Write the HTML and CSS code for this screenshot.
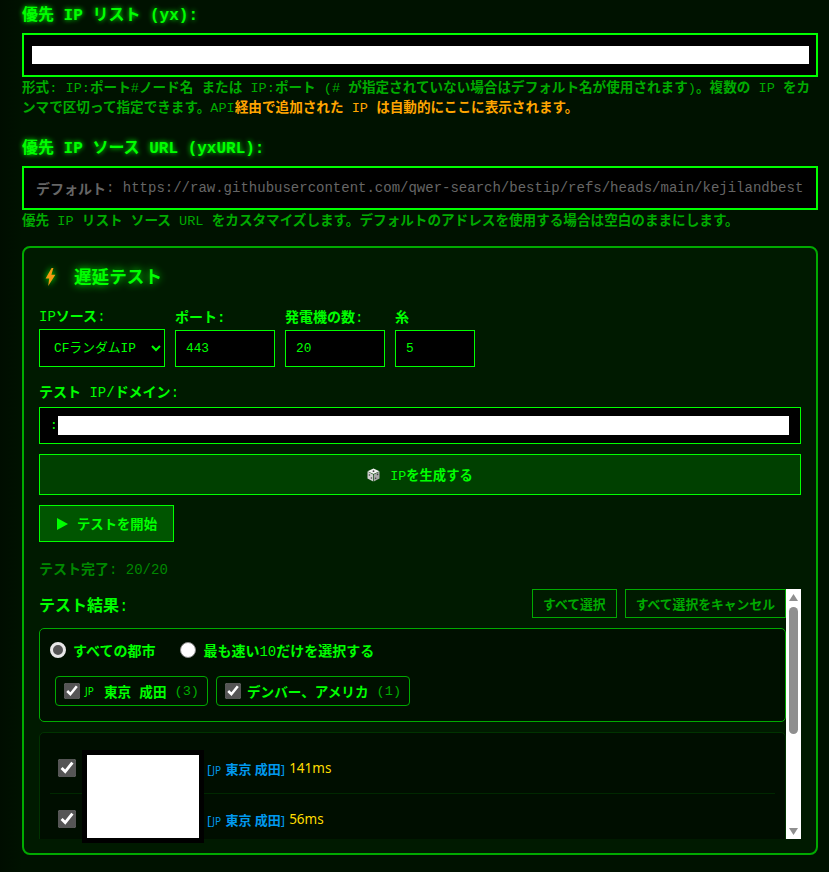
FILE: index.html
```html
<!DOCTYPE html>
<html lang="ja">
<head>
    <meta charset="UTF-8">
    <title>遅延テスト</title>
    <link rel="stylesheet" href="styles.css">
</head>
<body>
<div class="page">

    <!-- 优先IP -->
    <h3 class="field-title">優先 <span>IP</span> リスト (yx):</h3>
    <div class="textbox"><span class="mask"></span></div>
    <p class="hint">形式<i>: IP:</i>ポート<i>#</i>ノード名 または <i>IP:</i>ポート <i>(# </i>が指定されていない場合はデフォルト名が使用されます<i>)</i>。複数の <i>IP</i> をカンマで区切って指定できます。<i>API</i><em>経由で追加された <i>IP</i> は自動的にここに表示されます。</em></p>

    <h3 class="field-title second">優先 <span>IP</span> ソース <span>URL</span> (yxURL):</h3>
    <div class="textbox url">デフォルト<i>: https://raw.githubusercontent.com/qwer-search/bestip/refs/heads/main/kejilandbest</i></div>
    <p class="hint">優先 <i>IP</i> リスト ソース <i>URL</i> をカスタマイズします。デフォルトのアドレスを使用する場合は空白のままにします。</p>

    <!-- 延迟测试 -->
    <div class="card">
        <h3 class="card-title">
            <svg class="bolt" width="11" height="18" viewBox="0 0 11 18"><path d="M6.6 0 L0.6 10.4 L4.2 10.4 L3.2 18 L10.4 6.8 L6.4 6.8 L8.4 0 Z" fill="#f29a12"/></svg>
            <span>遅延テスト</span>
        </h3>

        <div class="options">
            <div class="option">
                <label><i>IP</i>ソース<i>:</i></label>
                <select class="source"><option>CFランダムIP</option></select>
            </div>
            <div class="option">
                <label>ポート:</label>
                <input class="num" type="text" value="443">
            </div>
            <div class="option">
                <label>発電機の数<i>:</i></label>
                <input class="num" type="text" value="20">
            </div>
            <div class="option">
                <label>糸</label>
                <input class="num small" type="text" value="5">
            </div>
        </div>

        <label class="test-label">テスト <i>IP/</i>ドメイン<i>:</i></label>
        <div class="testbox"><i>:</i><span class="mask"></span></div>

        <button class="gen-btn">
            <svg width="13" height="14" viewBox="0 0 13 14"><path d="M6.5 0.5 L12.5 3.2 L6.5 6 L0.5 3.2 Z" fill="#f2f2f2"/><path d="M0.5 3.6 L6.2 6.4 L6.2 13.5 L0.5 10.6 Z" fill="#d0d0d0"/><path d="M12.5 3.6 L6.8 6.4 L6.8 13.5 L12.5 10.6 Z" fill="#a8a8a8"/><circle cx="6.5" cy="3.2" r="0.9" fill="#444"/><circle cx="2.4" cy="7" r="0.8" fill="#444"/><circle cx="4.4" cy="10" r="0.8" fill="#444"/><circle cx="10.6" cy="6.4" r="0.8" fill="#444"/><circle cx="8.6" cy="10.2" r="0.8" fill="#444"/></svg>
            <span><i>IP</i>を生成する</span>
        </button>

        <button class="start-btn">
            <svg width="11" height="12" viewBox="0 0 11 12"><path d="M0 0 L11 6 L0 12 Z" fill="#00ff00"/></svg>
            <span>テストを開始</span>
        </button>

        <p class="status">テスト完了<i>: 20/20</i></p>

        <div class="results">
            <div class="results-inner">
                <div class="results-head">
                    <h4>テスト結果<i>:</i></h4>
                    <div class="head-btns">
                        <button>すべて選択</button>
                        <button>すべて選択をキャンセル</button>
                    </div>
                </div>

                <div class="filter">
                    <div class="radios">
                        <label><input type="radio" name="mode" checked><span>すべての都市</span></label>
                        <label><input type="radio" name="mode"><span>最も速い<i>10</i>だけを選択する</span></label>
                    </div>
                    <div class="chips">
                        <label class="chip"><input type="checkbox" checked><small>JP</small><span>東京 成田</span><i>(3)</i></label>
                        <label class="chip"><input type="checkbox" checked><span>デンバー、アメリカ</span><i>(1)</i></label>
                    </div>
                </div>

                <div class="list">
                    <div class="row"><input type="checkbox" checked><span class="loc">[<small>JP</small> <b>東京 成田</b>]</span><span class="ms">141ms</span></div>
                    <div class="row"><input type="checkbox" checked><span class="loc">[<small>JP</small> <b>東京 成田</b>]</span><span class="ms">56ms</span></div>
                </div>
            </div>

            <!-- 滚动条 -->
            <div class="scrollbar">
                <svg width="9" height="7" viewBox="0 0 9 7"><path d="M4.5 0 L9 7 L0 7 Z" fill="#8f8f8f"/></svg>
                <div class="thumb"></div>
                <svg class="down" width="9" height="7" viewBox="0 0 9 7"><path d="M0 0 L9 0 L4.5 7 Z" fill="#8f8f8f"/></svg>
            </div>
        </div>

        <!-- 遮住的部分 -->
        <div class="cover"></div>
    </div>

</div>
</body>
</html>
```

FILE: styles.css
```css
/*初始化*/
html,body{
    margin: 0;
    padding: 0;
    height: 872px;
    overflow: hidden;
}
body{
    background-color: #000f00;
    font-family: "Liberation Mono", "Noto Sans CJK JP", monospace;
    color: #00ff00;
}
i{
    font-style: normal;
    font-weight: normal;
}
h3,h4,p{
    margin: 0;
}

/*1.页面*/
.page{
    padding: 7px 11px 0 22px;
    background: linear-gradient(to right, #000d00, #001200 22px);
    height: 872px;
    box-sizing: border-box;
}
.field-title{
    font-size: 16px;
    line-height: 18px;
    margin-bottom: 8px;
    text-shadow: 0 0 5px #00ff00;
}
.field-title.second{
    margin-top: 21px;
}
.textbox{
    display: flex;
    height: 44px;
    box-sizing: border-box;
    padding: 11px 7px 11px 8px;
    border: 2px solid #00ff00;
    background-color: #000;
}
.mask{
    flex: 1;
    background-color: #fff;
}
.textbox.url{
    align-items: center;
    padding: 0 12px;
    font-size: 14px;
    font-weight: bold;
    white-space: nowrap;
    color: #666;
}
.hint{
    margin-top: 2px;
    font-size: 13.6px;
    line-height: 20px;
    font-weight: bold;
    color: #00aa00;
}
.hint em{
    font-style: normal;
    color: #ffa500;
}

/*2.延迟测试卡片*/
.card{
    position: relative;
    margin-top: 14px;
    padding: 15px 15px 14px;
    border: 2px solid #00aa00;
    border-radius: 8px;
    background-color: #001a00;
}
.card-title{
    display: flex;
    align-items: center;
    gap: 18px;
    height: 24px;
    padding-left: 6px;
    font-size: 17.6px;
    text-shadow: 0 0 8px #00ff00;
}
.bolt{
    margin-top: 4px;
    filter: drop-shadow(0 0 3px #00ff00);
}
.options{
    display: flex;
    align-items: flex-end;
    gap: 10px;
    margin-top: 20px;
}
.option label,.test-label{
    display: block;
    font-size: 14px;
    line-height: 20px;
    font-weight: bold;
}
.option label{
    margin-bottom: 2px;
}
.source{
    display: block;
    width: 126px;
    height: 38px;
    padding: 0 8px 0 10px;
    border: 1px solid #00ff00;
    border-radius: 0;
    background-color: #000;
    color: #00ff00;
    font-family: inherit;
    font-size: 12.8px;
}
.num{
    display: block;
    width: 100px;
    height: 37px;
    box-sizing: border-box;
    padding: 0 10px;
    border: 1px solid #00ff00;
    background-color: #000;
    color: #00ff00;
    font-family: inherit;
    font-size: 12.8px;
}
.num.small{
    width: 80px;
}
.test-label{
    margin-top: 16px;
}
.testbox{
    display: flex;
    align-items: center;
    height: 37px;
    box-sizing: border-box;
    margin-top: 4px;
    padding: 0 11px 0 10px;
    border: 1px solid #00ff00;
    background-color: #000;
    font-size: 12.8px;
}
.testbox .mask{
    height: 19px;
}

/*3.按钮*/
button{
    font-family: inherit;
    font-weight: bold;
    cursor: pointer;
}
.gen-btn{
    display: flex;
    align-items: center;
    justify-content: center;
    gap: 10px;
    width: 100%;
    height: 41px;
    margin-top: 10px;
    border: 1px solid #00ff00;
    background-color: #004000;
    color: #00ff00;
    font-size: 13.33px;
}
.start-btn{
    display: flex;
    align-items: center;
    gap: 9px;
    width: 135px;
    height: 37px;
    margin-top: 10px;
    padding: 0 0 0 17px;
    border: 1px solid #00ff00;
    background-color: #005500;
    color: #00ff00;
    font-size: 13.33px;
}
.status{
    margin-top: 18px;
    font-size: 14px;
    line-height: 20px;
    font-weight: bold;
    color: #008800;
}

/*4.结果*/
.results{
    display: flex;
    height: 250px;
    margin-top: 9px;
}
.results-inner{
    flex: 1;
    min-width: 0;
    overflow: hidden;
}
.scrollbar{
    display: flex;
    flex-direction: column;
    align-items: center;
    width: 15px;
    padding: 5px 0 4px;
    box-sizing: border-box;
    background-color: #fff;
}
.thumb{
    width: 9px;
    height: 127px;
    margin-top: 6px;
    border-radius: 5px;
    background-color: #8f8f8f;
}
.scrollbar .down{
    margin-top: auto;
}
.results-head{
    display: flex;
    justify-content: space-between;
    align-items: center;
    height: 29px;
}
.results-head h4{
    font-size: 16px;
}
.head-btns{
    display: flex;
    gap: 8px;
}
.head-btns button{
    height: 29px;
    padding: 0 10px;
    border: 1px solid #00aa00;
    background-color: transparent;
    color: #00aa00;
    font-size: 12.8px;
}
.filter{
    height: 94px;
    box-sizing: border-box;
    margin-top: 10px;
    padding: 11px 10px;
    border: 1px solid #00aa00;
    border-radius: 5px;
    background-color: #001000;
}
.radios{
    display: flex;
    gap: 25px;
    font-size: 14px;
    font-weight: bold;
}
.radios label{
    display: flex;
    align-items: center;
    gap: 7px;
    height: 20px;
}
.radios input{
    appearance: none;
    width: 16px;
    height: 16px;
    margin: 0;
    border: 1px solid #8a8a8a;
    border-radius: 50%;
    background-color: #fff;
}
.radios input:checked{
    border: 3px solid #e8e8e8;
    background-color: #555;
}
.chips{
    display: flex;
    gap: 8px;
    margin: 16px 0 0 5px;
}
.chip{
    display: flex;
    align-items: center;
    height: 30px;
    box-sizing: border-box;
    padding: 0 8px;
    border: 1px solid #00aa00;
    border-radius: 4px;
    font-size: 13.6px;
    font-weight: bold;
    white-space: pre;
}
.chip input{
    width: 16px;
    height: 16px;
    margin: 0 6px 0 0;
    accent-color: #555;
}
.chip small{
    font-family: "Noto Sans", sans-serif;
    font-size: 10px;
    font-weight: normal;
    width: 10px;
    margin: 0 9px 0 -1px;
}
.chip i{
    margin-left: 8px;
    color: #00aa00;
}
.list{
    margin-top: 10px;
    height: 120px;
    box-sizing: border-box;
    padding: 10px 10px 0;
    border: 1px solid #003300;
    border-radius: 5px;
    background-color: #000e00;
}
.row{
    display: flex;
    align-items: center;
    height: 51px;
    box-sizing: border-box;
    padding-left: 8px;
    border-bottom: 1px solid #002800;
    font-family: "Noto Sans", "Noto Sans CJK JP", sans-serif;
    font-size: 13px;
}
.row input{
    width: 18px;
    height: 18px;
    margin: 0 131px 0 0;
    accent-color: #555;
}
.loc{
    color: #0099ee;
    margin-right: 4px;
}
.loc small{
    font-size: 10px;
    margin: 0 1px;
}
.ms{
    color: #ffdd00;
    font-size: 13.5px;
}

/*5.遮挡块*/
.cover{
    position: absolute;
    left: 58px;
    top: 502px;
    width: 112px;
    height: 83px;
    border: 5px solid #000;
    background-color: #fff;
}
```
